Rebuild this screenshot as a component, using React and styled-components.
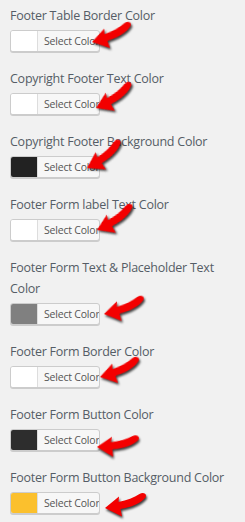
import React from "react";
import styled, { createGlobalStyle } from "styled-components";

const Global = createGlobalStyle`
  html, body { margin: 0; padding: 0; background: #f1f1f1; }
  body { font-family: "Open Sans", "Noto Sans", sans-serif; }
`;

const Page = styled.div`
  width: 245px;
  box-sizing: border-box;
  padding: 5px 8px 0 10px;
  display: flex;
  flex-direction: column;
`;

const Field = styled.div`
  position: relative;
  display: flex;
  flex-direction: column;
  align-items: flex-start;
  margin-bottom: 16px;
`;

const Label = styled.div`
  font-size: 12.5px;
  letter-spacing: -0.25px;
  line-height: 21px;
  color: #555d66;
  margin-bottom: 4px;
`;

const ColorButton = styled.div`
  display: flex;
  align-items: stretch;
  width: 90px;
  height: 22px;
  box-sizing: border-box;
  border: 1px solid #ccc;
  border-radius: 3px;
  box-shadow: 0 1px 0 #ccc;
  background: #f7f7f7;
  overflow: hidden;
`;

const Swatch = styled.span`
  flex: none;
  width: 26px;
  background: ${(p) => p.$color};
  border-right: 1px solid #ddd;
`;

const ButtonText = styled.span`
  flex: 1;
  display: flex;
  align-items: center;
  padding-left: 6px;
  font-size: 10.5px;
  letter-spacing: -0.2px;
  white-space: nowrap;
  color: #555;
`;

const ArrowWrap = styled.svg`
  position: absolute;
  overflow: visible;
  filter: drop-shadow(1.5px 2px 1px rgba(0, 0, 0, 0.75));
  transform-origin: 2px 17px;
`;

function Arrow({ x, y, rot }) {
  return (
    <ArrowWrap
      width="46"
      height="26"
      viewBox="0 0 46 26"
      style={{ left: x - 2, top: y - 17, transform: `rotate(${rot}deg)` }}
    >
      <path
        d="M2 17 L16 5.5 L15.5 11 C24 9.5 31 6.5 36.5 3 C40 0.8 44.5 2.5 42.5 6.5 C38 12 28 16.5 17.5 18 L19 25.5 Z"
        fill="#f30000"
      />
    </ArrowWrap>
  );
}

const items = [
  { label: "Footer Table Border Color", color: "#ffffff", arrow: { x: 82, y: 37, rot: -8 } },
  { label: "Copyright Footer Text Color", color: "#ffffff", arrow: { x: 86, y: 40, rot: -18 } },
  { label: "Copyright Footer Background Color", color: "#222222", arrow: { x: 77, y: 37, rot: -22 } },
  { label: "Footer Form label Text Color", color: "#ffffff", arrow: { x: 87, y: 36, rot: -18 } },
  { label: "Footer Form Text & Placeholder Text Color", color: "#808080", arrow: { x: 94, y: 57, rot: -5 } },
  { label: "Footer Form Border Color", color: "#ffffff", arrow: { x: 90, y: 36, rot: -8 } },
  { label: "Footer Form Button Color", color: "#2d2d2d", arrow: { x: 87, y: 43, rot: 5 } },
  { label: "Footer Form Button Background Color", color: "#fbc02d", arrow: { x: 95, y: 41, rot: 0 } },
];

export default function App() {
  return (
    <>
      <Global />
      <Page>
        {items.map((it) => (
          <Field key={it.label}>
            <Label>{it.label}</Label>
            <ColorButton>
              <Swatch $color={it.color} />
              <ButtonText>Select Color</ButtonText>
            </ColorButton>
            <Arrow {...it.arrow} />
          </Field>
        ))}
      </Page>
    </>
  );
}
